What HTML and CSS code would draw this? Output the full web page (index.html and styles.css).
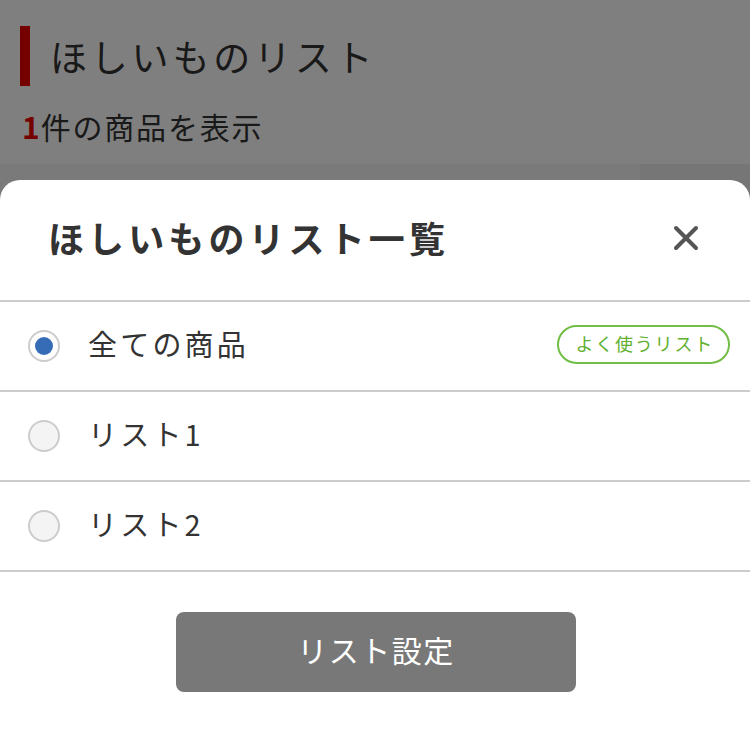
FILE: index.html
```html
<!DOCTYPE html>
<html lang="ja">
<head>
  <meta charset="UTF-8">
  <meta name="viewport" content="width=device-width, initial-scale=1.0">
  <title>ほしいものリスト</title>
  <link rel="stylesheet" href="styles.css">
</head>
<body>
  <div class="page">
    <h1 class="page-title">ほしいものリスト</h1>
    <p class="count"><span class="num">1</span>件の商品を表示</p>
    <div class="tabs">
      <div class="tab"></div>
      <div class="tab tab-side"></div>
    </div>
  </div>

  <div class="overlay"></div>

  <div class="modal">
    <div class="modal-head">
      <h2 class="modal-title">ほしいものリスト一覧</h2>
      <button class="close" aria-label="閉じる">
        <svg width="26" height="26" viewBox="0 0 26 26">
          <path d="M3 3 L23 23 M23 3 L3 23" stroke="#555" stroke-width="4" stroke-linecap="round"/>
        </svg>
      </button>
    </div>
    <ul class="lists">
      <li class="list-row">
        <span class="radio checked"></span>
        <span class="list-name">全ての商品</span>
        <span class="badge">よく使うリスト</span>
      </li>
      <li class="list-row">
        <span class="radio"></span>
        <span class="list-name">リスト1</span>
      </li>
      <li class="list-row">
        <span class="radio"></span>
        <span class="list-name">リスト2</span>
      </li>
    </ul>
    <div class="modal-foot">
      <button class="btn">リスト設定</button>
    </div>
  </div>
</body>
</html>
```

FILE: styles.css
```css
body {
  margin: 0;
  font-family: "Noto Sans CJK JP", "Noto Sans", sans-serif;
  color: #333;
  background: #fff;
  overflow: hidden;
}
.page {
  padding-top: 26px;
}
.page-title {
  margin: 0 0 0 20px;
  height: 60px;
  padding-left: 20px;
  border-left: 10px solid #eb0000;
  font-size: 37px;
  font-weight: normal;
  letter-spacing: 3.8px;
  line-height: 60px;
}
.count {
  margin: 20px 0 0 22px;
  font-size: 30px;
  letter-spacing: 1.8px;
  line-height: 40px;
}
.num {
  color: #eb0000;
  font-weight: bold;
  letter-spacing: 1px;
}
.tabs {
  display: flex;
  margin-top: 18px;
  height: 40px;
}
.tab {
  flex: 1;
  background: #f4f4f4;
}
.tab-side {
  flex: 0 0 110px;
  background: #ececec;
}
.overlay {
  position: fixed;
  inset: 0;
  background: rgba(0, 0, 0, 0.5);
}
.modal {
  position: fixed;
  top: 180px;
  left: 0;
  right: 0;
  bottom: 0;
  background: #fff;
  border-radius: 20px 20px 0 0;
}
.modal-head {
  display: flex;
  align-items: center;
  justify-content: space-between;
  height: 120px;
  padding: 0 44px 0 48px;
}
.modal-title {
  margin: 0;
  margin-top: -6px;
  font-size: 36px;
  font-weight: bold;
  letter-spacing: 4.1px;
}
.close {
  border: 0;
  background: none;
  padding: 0;
  width: 40px;
  height: 40px;
  margin-top: -4px;
  display: flex;
  align-items: center;
  justify-content: center;
}
.lists {
  list-style: none;
  margin: 0;
  padding: 0;
  border-top: 2px solid #ccc;
}
.list-row {
  display: flex;
  align-items: center;
  height: 88px;
  padding: 0 20px 0 28px;
  border-bottom: 2px solid #ccc;
}
.radio {
  box-sizing: border-box;
  width: 32px;
  height: 32px;
  border: 2px solid #ccc;
  border-radius: 50%;
  background: #f4f4f4;
  display: flex;
  align-items: center;
  justify-content: center;
}
.radio.checked {
  background: #fff;
}
.radio.checked::after {
  content: "";
  width: 18px;
  height: 18px;
  border-radius: 50%;
  background: #356cb5;
}
.list-name {
  margin-left: 28px;
  margin-top: -6px;
  font-size: 29px;
  letter-spacing: 3.2px;
}
.badge {
  margin-left: auto;
  margin-top: -4px;
  box-sizing: border-box;
  height: 39px;
  padding: 0 14px 0 16px;
  border: 2px solid #71bd45;
  border-radius: 20px;
  color: #5fb030;
  font-size: 18px;
  letter-spacing: 1.8px;
  line-height: 33px;
}
.modal-foot {
  display: flex;
  justify-content: center;
  padding-top: 40px;
}
.btn {
  width: 400px;
  height: 80px;
  margin-left: 2px;
  padding-bottom: 8px;
  border: 0;
  border-radius: 8px;
  background: #787878;
  color: #fff;
  font-family: inherit;
  font-size: 30px;
  letter-spacing: 1.5px;
}
```
